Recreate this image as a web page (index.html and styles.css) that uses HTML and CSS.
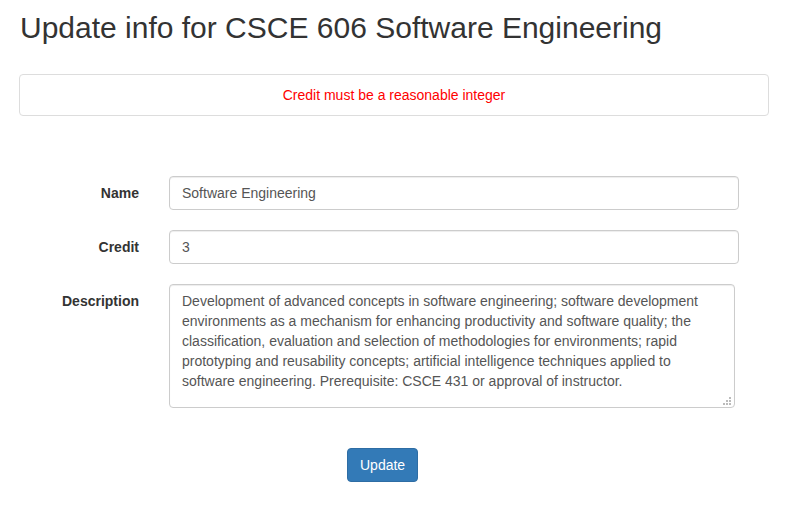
FILE: index.html
```html
<!DOCTYPE html>
<html>
<head>
<meta charset="utf-8">
<link rel="stylesheet" href="styles.css">
</head>
<body>
<div class="page">
  <h1 class="title">Update info for CSCE 606 Software Engineering</h1>
  <div class="alert">Credit must be a reasonable integer</div>
  <form class="form">
    <div class="row">
      <label class="label">Name</label>
      <input class="control" type="text" value="Software Engineering">
    </div>
    <div class="row">
      <label class="label">Credit</label>
      <input class="control" type="text" value="3">
    </div>
    <div class="row">
      <label class="label">Description</label>
      <div class="area-wrap">
        <textarea class="control area">Development of advanced concepts in software engineering; software development environments as a mechanism for enhancing productivity and software quality; the classification, evaluation and selection of methodologies for environments; rapid prototyping and reusability concepts; artificial intelligence techniques applied to software engineering. Prerequisite: CSCE 431 or approval of instructor.</textarea>
        <svg class="grip" width="9" height="9" viewBox="0 0 9 9">
          <rect x="6" y="0" width="2" height="2" fill="#bbb"/>
          <rect x="3" y="3" width="2" height="2" fill="#bbb"/>
          <rect x="6" y="3" width="2" height="2" fill="#bbb"/>
          <rect x="0" y="6" width="2" height="2" fill="#bbb"/>
          <rect x="3" y="6" width="2" height="2" fill="#bbb"/>
          <rect x="6" y="6" width="2" height="2" fill="#bbb"/>
        </svg>
      </div>
    </div>
    <div class="actions">
      <button class="btn" type="button">Update</button>
    </div>
  </form>
</div>
</body>
</html>
```

FILE: styles.css
```css
* { box-sizing: border-box; }
html, body { margin: 0; padding: 0; background: #fff; }
body {
  font-family: "Liberation Sans", Arial, Helvetica, sans-serif;
  font-size: 14px;
  line-height: 20px;
  color: #333;
}
.page {
  width: 750px;
  margin-left: 19px;
}
.title {
  font-size: 30px;
  font-weight: 500;
  line-height: 33px;
  margin: 11px 0 30px 1px;
  color: #333;
}
.alert {
  height: 42px;
  border: 1px solid #ddd;
  border-radius: 4px;
  color: #ff0000;
  text-align: center;
  line-height: 40px;
}
.form { margin-top: 60px; }
.row {
  display: flex;
  align-items: flex-start;
  margin-bottom: 20px;
}
.label {
  width: 120px;
  text-align: right;
  font-weight: bold;
  padding-top: 7px;
  margin-right: 30px;
}
.control {
  width: 570px;
  height: 34px;
  padding: 6px 12px;
  font-family: inherit;
  font-size: 14px;
  line-height: 20px;
  color: #555;
  background: #fff;
  border: 1px solid #ccc;
  border-radius: 4px;
  box-shadow: inset 0 1px 1px rgba(0,0,0,0.075);
  outline: none;
}
.area-wrap {
  position: relative;
  width: 566px;
  height: 124px;
}
.area {
  display: block;
  width: 566px;
  height: 124px;
  resize: none;
  overflow: hidden;
  margin: 0;
}
.grip {
  position: absolute;
  right: 3px;
  bottom: 2px;
}
.actions {
  margin-top: 40px;
  padding-left: 328px;
}
.btn {
  height: 34px;
  padding: 6px 12px;
  font-family: inherit;
  font-size: 14px;
  line-height: 20px;
  color: #fff;
  background: #337ab7;
  border: 1px solid #2e6da4;
  border-radius: 4px;
}
```
